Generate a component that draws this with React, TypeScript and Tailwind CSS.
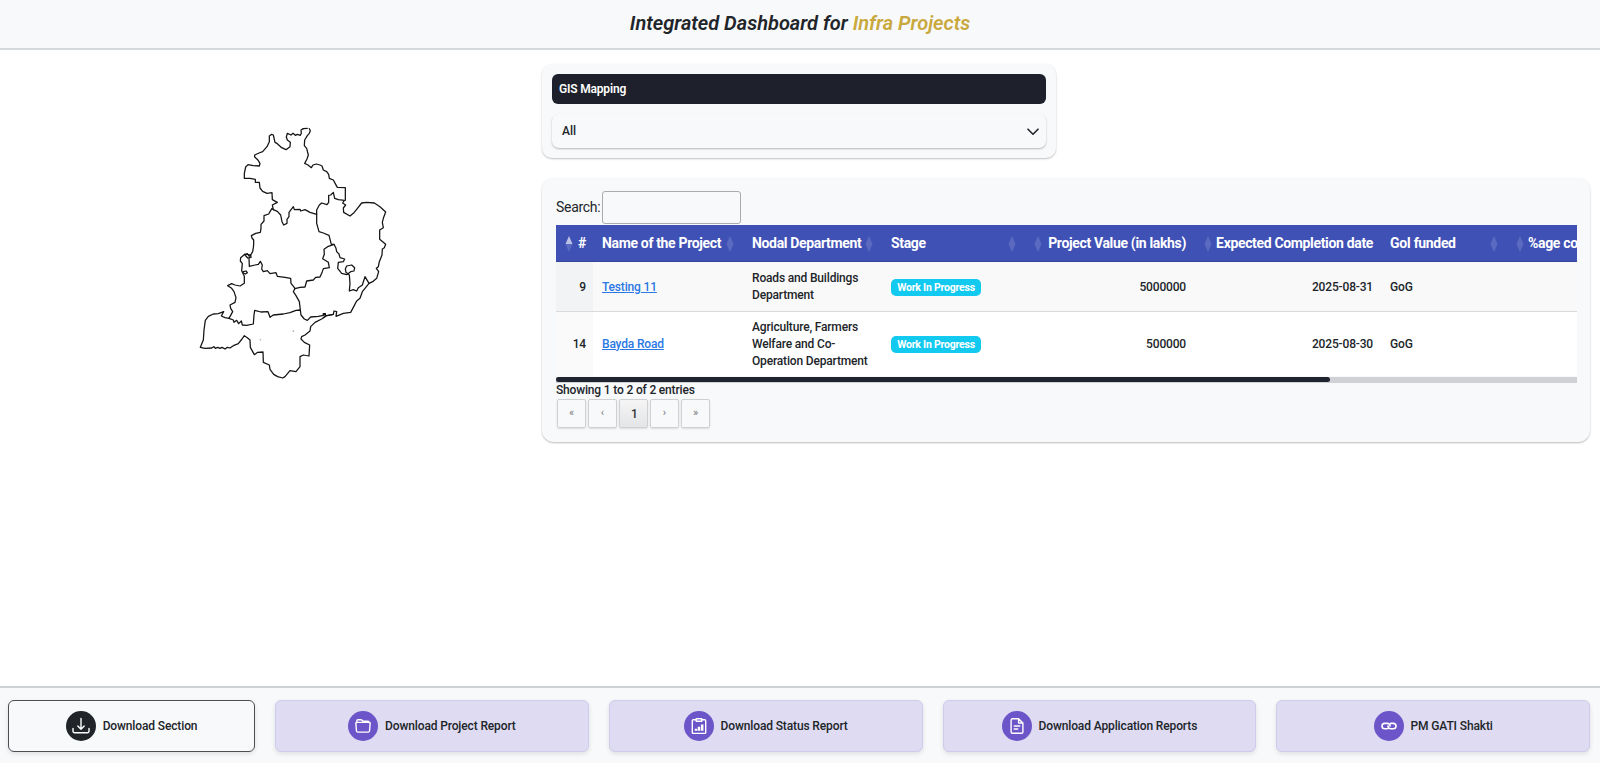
import React from "react";

const mapLines = [
  "M340 41L352 40M358 41L361 47L358 55L352 62L344 75L343 92L350 100L355 120L351 132L344 145L354 150L364 158L369 150L379 147L390 150L396 153L400 165L410 170L416 178L418 190L430 195L437 208L442 217L466 218L466 256",
  "M340 41L333 45L334 55L331 61L322 58L316 61L309 55L303 60L292 55L289 66L292 75L301 82L300 95L288 104L275 98L262 86L255 82L250 60L245 58L238 63L238 80L231 95L218 110L207 114L194 120L194 126L203 134L210 145L208 153L190 152L174 149L167 156L163 175L163 190L180 190L196 193L196 202L208 202L210 219L218 229L231 235L246 233L247 254L262 262L247 270L250 284",
  "M250 284L246 280L240 290L236 297L222 302L222 318L213 328L213 340L211 352L197 355L184 362L186 369L191 375L191 388L190 398L188 410L182 420L165 417L152 428L151 438L157 446L155 467L160 478L163 484L163 505L150 513L135 510L125 506L113 512L125 520L132 530L138 548L135 562L120 570L122 580L128 590L117 610",
  "M165 420L172 416L178 424L182 419L183 427L173 429ZM159 470L168 468L172 473L166 477L160 474Z",
  "M117 610L105 608L94 603L101 590L85 596L70 597L55 604L46 616L42 645L40 675L31 697L45 700L65 699L72 695L76 700L83 697L90 700L96 697L105 702L112 697L120 699L130 692L145 686L156 672L163 662L172 668L180 675L181 697L193 719L203 712L219 711L220 742L238 750L240 763L251 778L263 785L278 789L285 785L300 767L318 770L330 755L330 725L340 720L357 723L359 690L343 682L333 672L335 665L345 660L360 648L362 635L375 622L395 612L408 603L430 598",
  "M117 610L130 615L132 622L140 616L146 626L154 618L157 630L170 631L190 627L192 600L194 586L213 591L234 590L240 607L250 600L280 597L300 593L318 586L331 585L333 600L343 612L352 616L362 606L385 604L400 601",
  "M331 585L328 560L318 542L310 530L315 520L303 505L302 490L285 487L262 484L258 473L240 476L232 467L220 470L215 462L217 450L211 439L205 448L195 450L178 454L177 430",
  "M315 521L330 517L345 516L350 498L370 495L377 487L390 486L397 470L400 461L418 458L415 442L398 431L403 418L402 403L413 395L432 388",
  "M250 284L262 289L272 300L276 320L281 330L291 325L291 313L297 305L297 292L310 275L313 284L330 283L332 288L345 284L360 292L380 298L380 285L388 270L395 264L411 269L416 262L416 241L422 240L430 232L434 250L445 254L463 256L458 264L467 270L460 279L461 292L480 303L492 293L500 283L515 264L530 262L553 264L570 275L587 291L580 310L577 322L580 338L569 345L569 373L587 388L583 398L577 402L576 420L568 440L565 455L559 460L566 470L560 490L548 500L537 505",
  "M380 298L380 325L387 350L400 354L417 361L424 388L432 388L438 400L440 410L447 417L450 428L464 432L460 440L445 442L443 460L455 475L470 479L482 470L492 468L494 458L485 450L470 453L466 462L468 472L478 480L480 505L478 528L490 524L500 528L505 518L517 510L525 485L537 505L525 520L517 530L510 550L500 558L490 577L482 592L460 595L438 604L440 590L432 588L430 598L408 602L400 608",
];

function DistrictMap() {
  return (
    <svg
      className="mt-[65px] ml-[190px] h-[275px] w-[210px]"
      viewBox="0 0 630 825"
      fill="none"
      stroke="#151515"
      strokeWidth="3.8"
      strokeLinejoin="round"
      strokeLinecap="round"
    >
      {mapLines.map((d) => (
        <path key={d} d={d} />
      ))}
      <rect x="398" y="594" width="10" height="8" fill="#151515" stroke="none" />
      <circle cx="310" cy="648" r="2.5" fill="#999" stroke="none" />
      <circle cx="211" cy="674" r="2.5" fill="#bbb" stroke="none" />
    </svg>
  );
}

function Icon({ children }: { children: React.ReactNode }) {
  return (
    <svg
      viewBox="0 0 16 16"
      className="size-4"
      fill="none"
      stroke="currentColor"
      strokeWidth="1.4"
      strokeLinecap="round"
      strokeLinejoin="round"
    >
      {children}
    </svg>
  );
}

const actions = [
  {
    label: "Download Project Report",
    icon: (
      <Icon>
        <path d="M1.8 4.6V3a1.2 1.2 0 0 1 1.200-1.200h3c.6 0 .9.3 1.300.7l.7.8h5a1.200 1.200 0 0 1 1.200 1.300M1.600 4.400h12.800c.6 0 .9.4.8.9l-.7 7.700a1.300 1.300 0 0 1-1.300 1.100H2.800a1.300 1.300 0 0 1-1.300-1.100L.8 5.300c0-.5.3-.9.8-.9z" />
      </Icon>
    ),
  },
  {
    label: "Download Status Report",
    icon: (
      <Icon>
        <path d="M5 1.700H2.300a1 1 0 0 0-1 1v11.700a1 1 0 0 0 1 1h11.400a1 1 0 0 0 1-1V2.700a1 1 0 0 0-1-1H11M5.200.7h5.600v2.600H5.200z" />
        <path d="M5 10.800v2M8 8.800v4M11.200 6.400v6.400" strokeWidth="2.5" strokeLinecap="butt" />
      </Icon>
    ),
  },
  {
    label: "Download Application Reports",
    icon: (
      <Icon>
        <path d="M9.600.8H3.400a1.300 1.300 0 0 0-1.300 1.300v11.800a1.300 1.300 0 0 0 1.300 1.300h9.200a1.300 1.300 0 0 0 1.300-1.300V5zM9.600.8V5h4.300M5.200 8h5.600M5.200 11h3.600" />
      </Icon>
    ),
  },
  {
    label: "PM GATI Shakti",
    icon: (
      <Icon>
        <path
          d="M6.300 10.800H3.700a2.700 2.700 0 0 1 0-5.400h2.600A2.700 2.700 0 0 1 9 8.100M9.700 5.400h2.600a2.700 2.700 0 0 1 0 5.400H9.700A2.700 2.700 0 0 1 7 8.100"
          strokeWidth="1.6"
        />
      </Icon>
    ),
  },
];

function Sort({ active = false }: { active?: boolean }) {
  return (
    <svg viewBox="0 0 8 16" className="mt-px h-4 w-2 shrink-0">
      <path d="M4 0L7.500 8H.5z" fill="#fff" opacity={active ? 0.65 : 0.15} />
      <path d="M4 16L.5 8h7z" fill="#fff" opacity="0.15" />
    </svg>
  );
}

const rows = [
  {
    id: 9,
    name: "Testing 11",
    dept: ["Roads and Buildings", "Department"],
    value: "5000000",
    date: "2025-08-31",
  },
  {
    id: 14,
    name: "Bayda Road",
    dept: ["Agriculture, Farmers", "Welfare and Co-", "Operation Department"],
    value: "500000",
    date: "2025-08-30",
  },
];

const grid =
  "grid w-[1200px] grid-cols-[37px_150px_139px_137px_176px_188px_130px_243px] items-center";

function ProjectTable() {
  return (
    <div className="w-[1021px] overflow-hidden">
      <div
        className={`${grid} h-[37px] border-b border-[#39479a] bg-[#3f51b5] text-[14px] font-bold tracking-[-0.34px] whitespace-nowrap text-white`}
      >
        <div className="flex items-center justify-between pr-[7px] pl-[9px]">
          <Sort active />
          <span>#</span>
        </div>
        <div className="flex items-center justify-between pr-[9px] pl-[9px]">
          <span>Name of the Project</span>
          <Sort />
        </div>
        <div className="flex items-center justify-between pr-[9px] pl-[9px]">
          <span>Nodal Department</span>
          <Sort />
        </div>
        <div className="flex items-center justify-between pr-[3px] pl-[9px]">
          <span>Stage</span>
          <Sort />
        </div>
        <div className="flex items-center justify-between pr-[9px] pl-[15px]">
          <Sort />
          <span>Project Value (in lakhs)</span>
        </div>
        <div className="flex items-center justify-between pr-[10px] pl-[9px]">
          <Sort />
          <span>Expected Completion date</span>
        </div>
        <div className="flex items-center justify-between pr-[15px] pl-[7px]">
          <span>GoI funded</span>
          <Sort />
        </div>
        <div className="flex items-center gap-[4px] pl-[3px]">
          <Sort />
          <span>%age completion</span>
        </div>
      </div>
      {rows.map((r, i) => (
        <div
          key={r.id}
          className={`${grid} ${i === 0 ? "h-[50px] border-b border-[#d9dadc] bg-[#f9f9f9]" : "h-[64px] bg-white"} text-[12px] leading-[17px] font-medium tracking-[-0.17px] text-[#212529]`}
        >
          <div
            className={`flex h-full items-center justify-end pr-[7px] ${i === 0 ? "bg-[#f2f3f4] pt-px" : "bg-[#fafafa]"}`}
          >
            {r.id}
          </div>
          <div className={i === 0 ? "pt-px pl-[9px]" : "pl-[9px]"}>
            <a className="text-[#2b78e4] underline">{r.name}</a>
          </div>
          <div className="pl-[9px] whitespace-nowrap">
            {r.dept.map((line) => (
              <div key={line}>{line}</div>
            ))}
          </div>
          <div className={i === 0 ? "flex pt-[2px] pl-[9px]" : "flex pl-[9px]"}>
            <span className="flex h-[17px] w-[90px] items-center justify-center rounded-[5px] bg-[#12c9f0] text-[10.5px] font-bold tracking-[-0.22px] whitespace-nowrap text-white">
              Work In Progress
            </span>
          </div>
          <div className={i === 0 ? "pt-px pr-[9px] text-right" : "pr-[9px] text-right"}>{r.value}</div>
          <div className={i === 0 ? "pt-px pr-[10px] text-right" : "pr-[10px] text-right"}>{r.date}</div>
          <div className={i === 0 ? "pt-px pl-[7px]" : "pl-[7px]"}>GoG</div>
          <div />
        </div>
      ))}
      <div className="mt-px h-[6px] bg-[#cfd1d4]">
        <div className="h-[5px] w-[774px] rounded-[3px] bg-[#20242e]" />
      </div>
    </div>
  );
}

export default function App() {
  return (
    <div className="flex h-[763px] w-[1600px] flex-col overflow-hidden bg-white font-[Roboto,sans-serif] text-[#212529]">
      <header className="flex h-[50px] shrink-0 items-center justify-center border-b-2 border-[#d6d9dc] bg-[#f8f9fb] pb-[2px]">
        <h1 className="text-[20px] font-semibold italic">
          Integrated Dashboard for <span className="text-[#c9a83e]">Infra Projects</span>
        </h1>
      </header>

      <main className="flex min-h-0 flex-1">
        <section className="w-[542px] shrink-0">
          <DistrictMap />
        </section>
        <section className="flex flex-col gap-5 pt-[14px]">
          <div className="h-[94px] w-[514px] rounded-[10px] bg-[#f8f9fb] p-[10px] shadow-[0_1px_2px_rgba(0,0,0,0.25)]">
            <div className="flex h-[30px] items-center rounded-[6px] bg-[#1e212b] px-[7px] text-[12px] font-semibold tracking-[-0.18px] text-white">
              GIS Mapping
            </div>
            <div className="mt-[10px] flex h-[34px] items-center justify-between rounded-[7px] pr-[7px] pb-px pl-[10px] text-[12px] font-medium shadow-[0_1px_2px_rgba(0,0,0,0.27)]">
              All
              <svg
                viewBox="0 0 12 8"
                className="mt-[2px] h-2 w-3"
                fill="none"
                stroke="#212529"
                strokeWidth="1.6"
                strokeLinecap="round"
                strokeLinejoin="round"
              >
                <path d="M1 1.200l5 5 5-5" />
              </svg>
            </div>
          </div>

          <div className="h-[264px] w-[1048px] rounded-[12px] bg-[#f8f9fb] pt-[13px] pr-[13px] pl-[14px] shadow-[0_1px_2px_rgba(0,0,0,0.27)]">
            <label className="flex h-[34px] items-start text-[14px] leading-[33px] tracking-[-0.3px]">
              <span className="w-[46px]">Search:</span>
              <input className="h-[33px] w-[139px] rounded-[3px] border border-[#a9abae] bg-transparent" />
            </label>
            <ProjectTable />
            <div className="h-[15px] text-[12px] leading-[15px] font-medium tracking-[-0.17px]">
              Showing 1 to 2 of 2 entries
            </div>
            <div className="mt-px ml-px flex gap-[2px]">
              {["«", "‹", "1", "›", "»"].map((p) => (
                <button
                  key={p}
                  className={`h-[29px] w-[29px] rounded-[2px] border border-[#cfd0d2] shadow-[0_1px_2px_rgba(0,0,0,0.12)] ${p === "1" ? "bg-linear-to-b from-[#f5f5f6] to-[#e4e5e6] pl-[2px] text-[12px] font-medium text-[#333]" : "text-[11px] text-[#777]"}`}
                >
                  {p}
                </button>
              ))}
            </div>
          </div>
        </section>
      </main>

      <footer className="flex h-[77px] shrink-0 gap-5 border-t-2 border-[#cfd2d5] bg-[#f8f9fb] pt-[12px] pr-[10px] pl-[8px] text-[12px] font-medium tracking-[-0.13px]">
        <button className="flex h-[52px] w-[247px] items-center justify-center gap-[7px] rounded-[6px] border border-[#4b4e52] shadow-[0_2px_5px_rgba(0,0,0,0.1)]">
          <span className="flex size-[30px] items-center justify-center rounded-full bg-[#212529] text-white">
            <svg
              viewBox="0 0 18 18"
              className="size-[18px]"
              fill="none"
              stroke="currentColor"
              strokeWidth="1.4"
              strokeLinecap="round"
              strokeLinejoin="round"
            >
              <path d="M9 1.500v10.500M5.800 9L9 12.200 12.200 9M1 11.500v2.800a1.500 1.500 0 0 0 1.500 1.500h13a1.500 1.500 0 0 0 1.500-1.500v-2.800" />
            </svg>
          </span>
          Download Section
        </button>
        {actions.map((a) => (
          <button
            key={a.label}
            className="flex h-[52px] flex-1 items-center justify-center gap-[7px] rounded-[6px] border border-[#cfcbea] bg-[#dedbf2] shadow-[0_2px_5px_rgba(0,0,0,0.1)]"
          >
            <span className="flex size-[30px] items-center justify-center rounded-full bg-[#6b55c8] text-white">
              {a.icon}
            </span>
            {a.label}
          </button>
        ))}
      </footer>
    </div>
  );
}
